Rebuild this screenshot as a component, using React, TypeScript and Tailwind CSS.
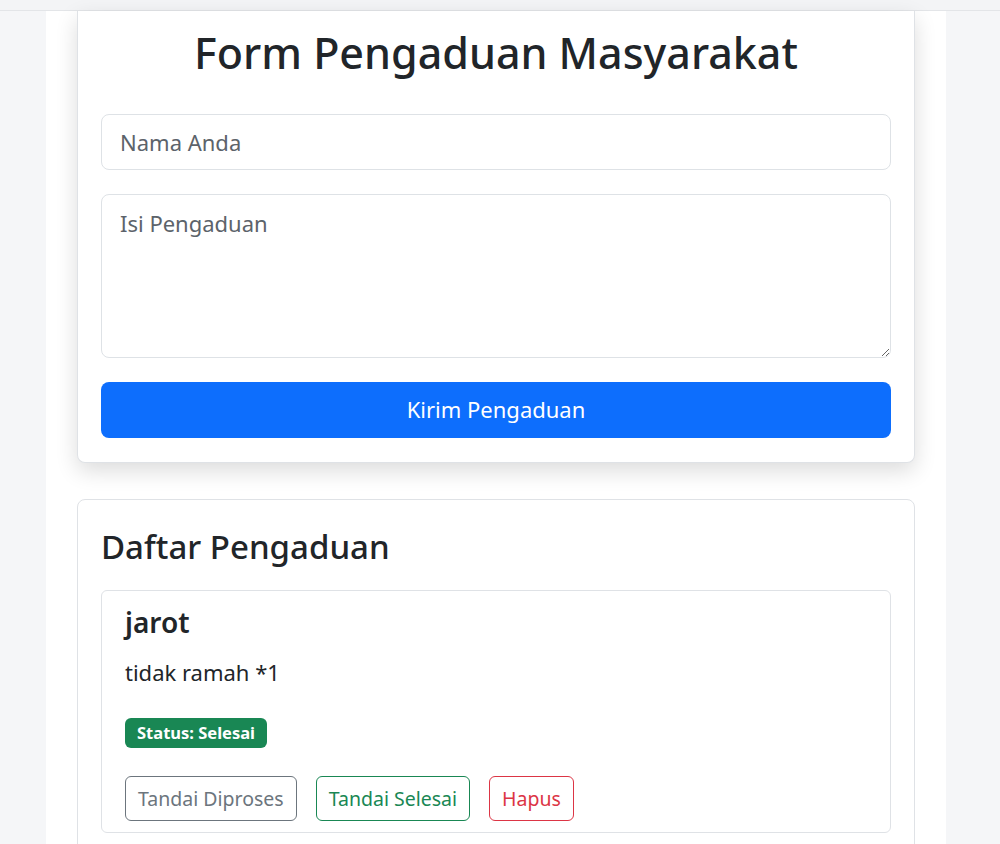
import { useState } from "react";

const FONT = "font-['Noto_Sans','Open_Sans',sans-serif]";

export default function App() {
  const [nama, setNama] = useState("");
  const [isi, setIsi] = useState("");

  return (
    <div className={`min-h-screen bg-[#f5f6f8] text-[#212529] ${FONT}`}>
      {/* top strip */}
      <div className="h-[11px] border-b border-[#e3e5e8] bg-[#f3f4f6]" />

      <div className="pl-[46px]">
        <div className="w-[900px] min-h-[833px] bg-white px-[31px]">
          {/* Form card */}
          <div className="rounded-b-lg border border-t-0 border-[#dfe2e6] bg-white px-[23px] pb-[24px] shadow-[0_8px_22px_rgba(0,0,0,0.14)]">
            <h1 className="pt-[16px] pb-[35px] text-center text-[43px] font-medium leading-[1.2]">
              Form Pengaduan Masyarakat
            </h1>

            <div className="flex flex-col gap-[24px]">
              <input
                value={nama}
                onChange={(e) => setNama(e.target.value)}
                placeholder="Nama Anda"
                className="h-[56px] w-full rounded-lg border border-[#dee2e6] px-[18px] text-[22px] outline-none placeholder:text-[#5c636a]"
              />
              <textarea
                value={isi}
                onChange={(e) => setIsi(e.target.value)}
                placeholder="Isi Pengaduan"
                className="block h-[164px] w-full rounded-lg border border-[#dee2e6] px-[18px] py-[12px] text-[22px] outline-none placeholder:text-[#5c636a]"
              />
              <button
                type="button"
                className="h-[56px] w-full rounded-lg bg-[#0d6efd] text-[22px] text-white"
              >
                Kirim Pengaduan
              </button>
            </div>
          </div>

          {/* List card */}
          <div className="mt-[36px] rounded-lg border border-[#dfe2e6] bg-white px-[23px] pt-[27px] pb-[24px]">
            <h2 className="mb-[24px] text-[33px] font-medium leading-[1.2]">Daftar Pengaduan</h2>

            <div className="rounded-md border border-[#dfe2e6] px-[23px] pt-[15px] pb-[11px]">
              <h5 className="text-[28px] font-semibold leading-[1.2]">jarot</h5>
              <p className="mt-[16px] text-[22px] leading-[1.5]">tidak ramah *1</p>
              <span className="mt-[29px] inline-block rounded-md bg-[#198754] px-[12px] py-[3px] text-[16.5px] font-bold leading-[24px] text-white">
                Status: Selesai
              </span>
              <div className="mt-[28px] flex gap-[19px]">
                <button
                  type="button"
                  className="h-[45px] rounded-md border border-[#6c757d] px-[12px] text-[19.5px] text-[#6c757d]"
                >
                  Tandai Diproses
                </button>
                <button
                  type="button"
                  className="h-[45px] rounded-md border border-[#198754] px-[12px] text-[19.5px] text-[#198754]"
                >
                  Tandai Selesai
                </button>
                <button
                  type="button"
                  className="h-[45px] rounded-md border border-[#dc3545] px-[12px] text-[19.5px] text-[#dc3545]"
                >
                  Hapus
                </button>
              </div>
            </div>
          </div>
        </div>
      </div>
    </div>
  );
}
